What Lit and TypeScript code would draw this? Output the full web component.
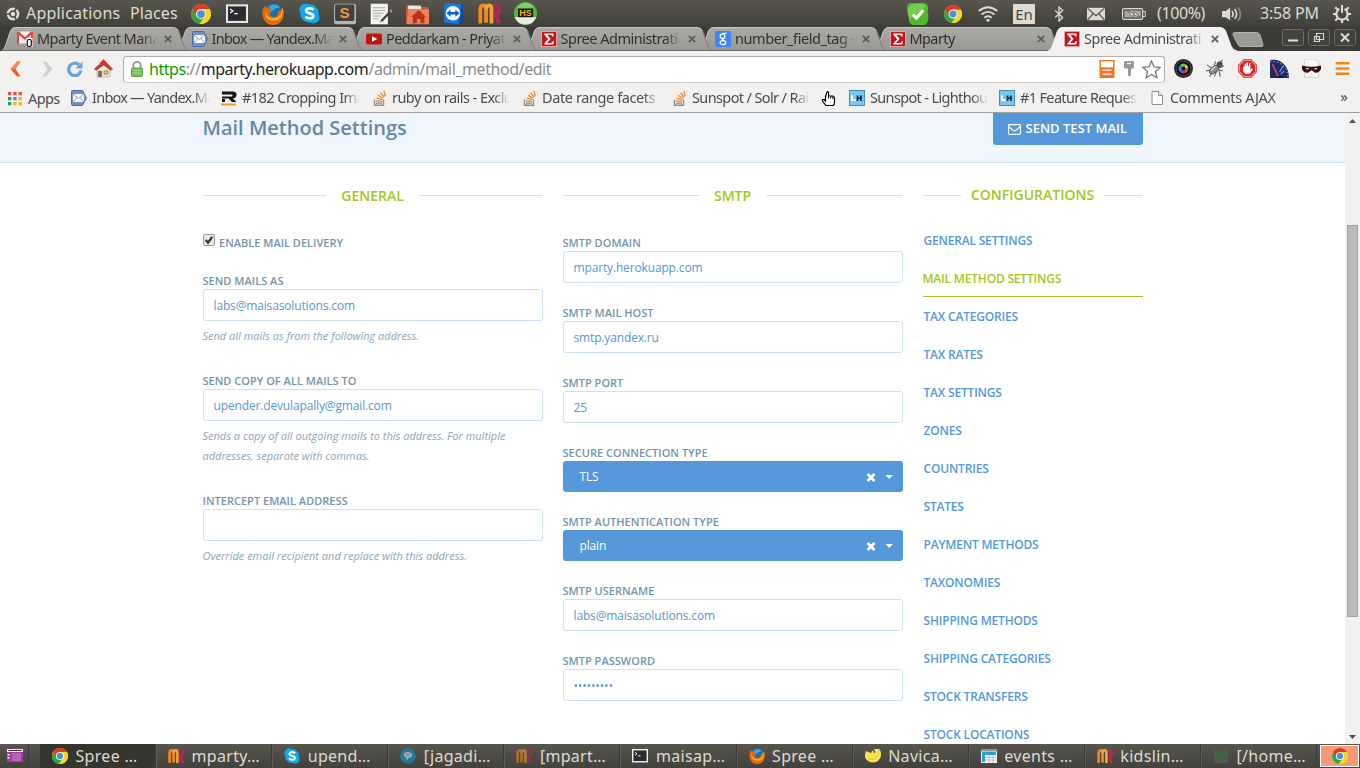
import { LitElement, html, css, svg, nothing } from 'lit';
import { customElement, property } from 'lit/decorators.js';
import { styleMap } from 'lit/directives/style-map.js';

const art: Record<string, any> = {
  ubuntu: svg`<circle cx="8" cy="8" r="6.4" fill="#dfdbd2"/><circle cx="8" cy="8" r="3" fill="none" stroke="#4a4943" stroke-width="1.5"/><path d="M1.5 8h4M9.6 5.2l2-3.6M9.6 10.8l2 3.6" stroke="#4a4943" stroke-width="1.6"/>`,
  chrome: svg`<circle cx="8" cy="8" r="8" fill="#f9d61f"/><path d="M14.9 4H8l-3.5 6L1.1 4a8 8 0 0 0 5.8 11.9L10.6 10z" fill="#32a447"/><path d="M8 4h6.9a8 8 0 0 1-8 11.9L11.5 10z" fill="#f9d61f"/><path d="M1.1 4A8 8 0 0 1 14.9 4H8L4.5 10z" fill="#de3a2b"/><circle cx="8" cy="8" r="4" fill="#f4f4f4"/><circle cx="8" cy="8" r="3.1" fill="#4a8fdf"/>`,
  terminal: svg`<rect x=".5" y="1.5" width="15" height="12.5" fill="#d8d8d6" stroke="#efefee"/><rect x="1.500" y="2.500" width="13" height="10.500" fill="#2c2b31"/><path d="M3 4.300l2 1.500-2 1.500M6 7.800h2.600" fill="none" stroke="#fff" stroke-width=".9"/>`,
  firefox: svg`<circle cx="8.2" cy="7.6" r="7.2" fill="#1d6fae"/><path d="M5 3c2-3 6-2 8 0l-3 1-3 2z" fill="#3aa9dc"/><path d="M15 3.2C17 8 15.500 16 8 16 2 16-.6 10 .7 4.400L1.800 2l.9 1.500L5 3.200c-.5 1.500 2 2 2.500 2.500-.2 1-1.700.8-2 2.300.4 2.400 3.600 3 5.300 1.200C12.500 7.200 11 5 13.800 5.600z" fill="#e66a16"/><path d="M15 3.200C16 9 13 13 8 12.800 3.500 12.600 2 9 2.500 6c.6 3 2 4.500 4.200 5 3.500.7 6.800-1.500 7.500-4.500z" fill="#f9b31f"/>`,
  skype: svg`<circle cx="5" cy="5" r="4.700" fill="#0fa6e6"/><circle cx="11" cy="11" r="4.700" fill="#0fa6e6"/><circle cx="8" cy="8" r="7" fill="#12a9ea"/><path d="M11 5.300C9.800 3.600 5.500 3.700 5.500 5.900c0 2.600 5.400 1.400 5.400 4 0 2.300-4.600 2.400-5.900.4" fill="none" stroke="#fff" stroke-width="2"/>`,
  sublime: svg`<rect x="0" y=".5" width="16" height="15" rx="1.500" fill="#b4b4b2"/><rect x=".8" y="1" width="14" height="12" rx="1" fill="#424143"/><text x="7.700" y="11" font-family="Liberation Sans" font-weight="bold" font-size="11" text-anchor="middle" fill="#f39b35">S</text>`,
  editor: svg`<rect x=".5" y=".5" width="12.500" height="15" fill="#f3f3f1"/><path d="M2 3.500h9M2 5.500h9M2 7.500h8M2 9.500h6M2 11.500h4" stroke="#a9a9a7" stroke-width=".8"/><path d="M7.500 12.800 14.800 5l1.200 1.300-7.200 7.500z" fill="#394438"/><path d="M14 5.800 15 4.600l1.600 1.500-1.100 1.200z" fill="#c178bd"/><path d="M6.500 14.200l1-1.700 1.400 1.300z" fill="#d7bb68"/>`,
  folder: svg`<path d="M0 2h6l1 1.500h8.500V15H0z" fill="#c9573a"/><path d="M1.500 2.500h9V5h-9z" fill="#eee9df"/><path d="M1.500 5H16v10.500H.5z" fill="#e8835d"/><path d="M8.800 5.500l5.200 5h-1.200v4.300h-2.800v-3H7.600v3H4.800v-4.300H3.600z" fill="#bd3210"/>`,
  teamviewer: svg`<path d="M1 0l13 1v14l-2 1L1 15z" fill="#0f79e6"/><path d="M14 1l1.300.8V14L12 16z" fill="#0b4da5"/><circle cx="7.600" cy="7.800" r="5.600" fill="#f4f8ff"/><path d="M2.600 7.800l3.200-2.600v1.600h3.600V5.200l3.200 2.600-3.200 2.600V8.800H5.800v1.600z" fill="#0a61c9"/>`,
  rubymine: svg`<path d="M1.600 15V5.300Q1.600 2.300 3.700 2.300T5.600 5.300V14.500" fill="none" stroke="#f08a22" stroke-width="2.600"/><path d="M5.600 5.300Q5.700 2.300 7.700 2.300T9.400 5.300V15" fill="none" stroke="#f3a632" stroke-width="2.600"/><path d="M10 1h1.500C17.500.8 17 8 14 9L16 15h-3L11 9.500V7c3 0 3.500-3.500 0-3.700z" fill="#bd2459"/>`,
  hs: svg`<circle cx="8" cy="8" r="8" fill="#58b33d"/><path d="M.5 10.500h15A8 8 0 0 1 .5 10.500z" fill="#eceae6"/><path d="M2 4A7 7 0 0 1 14 4z" fill="#84cf6b"/><rect x="2.800" y="4.600" width="10.500" height="6" fill="#191a16"/><text x="8" y="9.800" font-family="Liberation Sans" font-weight="bold" font-size="6.200" text-anchor="middle" fill="#f4ae21">HS</text>`,
  status: svg`<path d="M3 0h8c3.500 0 5 2 4 6 1.500 5 0 10-3 10H5.500C2 16 .8 13 1.500 10-.5 5-1 0 3 0z" fill="#52b82f"/><path d="M1 3C5 0 10 0 14 2L2 12C.5 10 0 6 1 3z" fill="#72cf4b"/><path d="M4.200 8.400l2.700 2.500 5-5.700" fill="none" stroke="#fff" stroke-width="2.300"/>`,
  wifi: svg`<path d="M.6 5.600Q8-.5 15.400 5.600M2.800 8.400Q8 4.200 13.200 8.400M5 11Q8 8.600 11 11" fill="none" stroke="#dfdbd2" stroke-width="1.500"/><path d="M6.300 12.800Q8 11.200 9.700 12.800L8 14.600z" fill="#dfdbd2"/>`,
  bluetooth: svg`<path d="M4.200 4.500l7.500 7L8 15V1l3.700 3.500-7.500 7" fill="none" stroke="#dfdbd2" stroke-width="1.300"/>`,
  envelope: svg`<path d="M0 2.500h16v11H0z" fill="#dfdbd2"/><path d="M.5 3l7.500 6.500L15.500 3M.5 13.200l5.200-5.700M15.500 13.200l-5.200-5.700" fill="none" stroke="#4c4b44" stroke-width="1.100"/>`,
  battery: svg`<rect x=".6" y="1.600" width="20" height="10.800" rx="1.500" fill="none" stroke="#dfdbd2" stroke-width="1.200"/><path d="M21 4.500h2.300v5H21" fill="none" stroke="#dfdbd2"/><rect x="2.500" y="3.500" width="16.300" height="7" fill="#aaa89f"/><path d="M5 3.500l7 3.500.5-2.200 6 5.700-7-3-.5 2.200z" fill="#f5f2e8" stroke="#4b4a43" stroke-width=".7"/>`,
  speaker: svg`<path d="M0 5.500h3L6.500 3v10L3 10.500H0z" fill="#dfdbd2"/><path d="M8 5.500q1.800 2.500 0 5M10.200 4q3 4 0 8" fill="none" stroke="#dfdbd2" stroke-width="1.300"/><path d="M12.800 2.500q4 5.500 0 11" fill="none" stroke="#8d8b82" stroke-width="1.300"/>`,
  power: svg`<path d="M5.700 3.600a5 5 0 1 0 4.600 0" fill="none" stroke="#dfdbd2" stroke-width="1.900"/><path d="M8 0v7" stroke="#dfdbd2" stroke-width="1.800"/><path d="M2 2l2.200 2.200M14 2l-2.200 2.200M0 8h3M16 8h-3M2 14l2.200-2.200M14 14l-2.200-2.200M8 16v-3" stroke="#dfdbd2" stroke-width="1.900"/>`,
  gmail: svg`<path d="M0 .5h16v12H0z" fill="#eee"/><path d="M0 13V.5h2L8 6l6-5.500h2V13h-2V4L8 9 2 4v9z" fill="#dd4b45"/><path d="M9.500 7h6v9h-6z" fill="#fff"/><rect x="10.300" y="8.500" width="4" height="7" rx="1.500" fill="#fff" stroke="#111" stroke-width="1.200"/>`,
  yandex: svg`<path d="M1.500.5h10L15.500 8l-4 7.500h-10a1 1 0 0 1-1-1v-13a1 1 0 0 1 1-1z" fill="#7390c8" stroke="#4d6ba7"/><path d="M2 4h11v8H2z" fill="#f5f7fc"/><path d="M2 4l5.500 4.500L13 4M2 12l4-4.500M13 12 9 7.500" fill="none" stroke="#7288b5" stroke-width=".8"/>`,
  youtube: svg`<rect y="2.500" width="16" height="11" rx="2" fill="#c4130e"/><path d="M6 5.200v5.600L11.300 8z" fill="#fff"/>`,
  sigma: svg`<rect width="16" height="16" rx="1" fill="#f3dada"/><rect x=".7" y=".7" width="14.600" height="14.600" fill="#c4161c"/><path d="M3.300 2.500h9.200v3h-1.100Q11 3.800 9 3.800H6.400L9.500 7.900 6 12h3.500q2 0 2.500-2h1l-.7 3.500H3.300v-.9L7.100 8.300 3.300 3.500z" fill="#fff"/>`,
  google: svg`<rect width="16" height="16" rx="1.500" fill="#4285f4"/><circle cx="7.500" cy="5.200" r="2.300" fill="none" stroke="#fff" stroke-width="1.300"/><path d="M7.500 2.400h4M8.200 7.400l-.6 1.300 2.300 1.600" fill="none" stroke="#fff" stroke-width="1.200"/><ellipse cx="7.900" cy="11.700" rx="2.800" ry="2" fill="none" stroke="#fff" stroke-width="1.200"/>`,
  back: svg`<path d="M12.500.5H9L2.500 8 9 15.500h3.500L7.500 8z" fill="#ea5f2c"/><path d="M12.500.5H9L2.500 8h5z" fill="#f28e63"/>`,
  forward: svg`<path d="M3.500.5H7L13.500 8 7 15.500H3.500L8.500 8z" fill="#cfcecc"/>`,
  reload: svg`<path d="M12 3.700A6.200 6.200 0 1 0 14 9.500" fill="none" stroke="#6ba2d6" stroke-width="3.200"/><path d="M15.500.5v7h-7z" fill="#6ba2d6"/>`,
  house: svg`<path d="M2.500 7.500 8 3l5.500 4.500v7.700h-11z" fill="#efe6d7" stroke="#b3a792" stroke-width=".6"/><path d="M.3 8.700 8 .5l7.700 8.200-1.700.6L8 5 2 9.300z" fill="#c63c36" stroke="#ad2b2b" stroke-width=".6"/><path d="M3.600 10h3v5h-3z" fill="#6d6259"/><path d="M8.400 10h3.400v2.800H8.400z" fill="#e7c565" stroke="#786750" stroke-width=".5"/><path d="M3 2h2v2L3 6z" fill="#ddd"/>`,
  lock: svg`<path d="M4.300 8V4.500a3.700 3.700 0 0 1 7.400 0V8" fill="none" stroke="#9b9b99" stroke-width="2"/><rect x="2.500" y="7" width="11" height="8.500" rx="1" fill="#78c257" stroke="#58a13c"/><path d="M3.500 9.500h9M3.500 12h9" stroke="#9bd680"/>`,
  stack2: svg`<rect x="2" y=".5" width="12" height="15" fill="#fff" stroke="#f47521" stroke-width="1.300"/><rect x="2" y="6.500" width="12" height="9" fill="#f47521"/><path d="M4 9h8M4 12.500h8" stroke="#fff" stroke-width="1.200"/>`,
  key: svg`<path d="M4 0h8a1 1 0 0 1 1 1v5.500a1 1 0 0 1-1 1h-2V14l-1.500 1.500L7 14.500v-7H4a1 1 0 0 1-1-1V1a1 1 0 0 1 1-1z" fill="#999"/><path d="M6 2.500h4" stroke="#fff" stroke-width="1.200"/>`,
  star: svg`<path d="M8 .8l2.100 5 5.300.4-4.100 3.500 1.300 5.200L8 12.100l-4.600 2.800 1.300-5.200L.6 6.200l5.300-.4z" fill="#fff" stroke="#747474" stroke-width="1.050"/>`,
  lens: svg`<circle cx="8" cy="8" r="8" fill="#25282b"/><circle cx="8" cy="8" r="6.200" fill="#09090b" stroke="#555" stroke-width=".7"/><path d="M8 8 5 5a4 4 0 0 1 5-.5z" fill="#78c63c"/><path d="M8 8l2-3.500A4 4 0 0 1 12 8z" fill="#ebce36"/><path d="M8 8h4a4 4 0 0 1-3 4z" fill="#e34b48"/><path d="M8 8l1 4a4 4 0 0 1-4-1z" fill="#9f38b5"/><path d="M8 8 5 11a4 4 0 0 1 0-6z" fill="#268ed4"/><circle cx="8" cy="8" r="1.600" fill="#151a24"/>`,
  bug: svg`<path d="M1 5l4 3M0 10l5-1M3 15l3-5M7 15l2-5M8 2L7 6M12 15l-1-5M14 10l-4-1M15 6l-4 1M14 1l-3 2" stroke="#666" stroke-width=".9"/><ellipse cx="7" cy="9" rx="4.800" ry="2.600" transform="rotate(-38 7 9)" fill="#8b8d8d" stroke="#4a4a4a" stroke-width=".7"/><circle cx="11.500" cy="4.800" r="2.600" fill="#4d4f50"/><path d="M4 10l4-4" stroke="#ddd"/>`,
  stop: svg`<path d="M5 0h6l5 5v6l-5 5H5l-5-5V5z" fill="#c9201f"/><path d="M5.400 1h5.200L15 5.400v5.200L10.600 15H5.400L1 10.600V5.400z" fill="#dc2524" stroke="#f9d7d4" stroke-width=".8"/><path d="M4.300 6.500h1.200V4h1.200v3.500l.4-4.500h1.300l.3 4.500.8-4h1.100L10.300 9l1.500-1.200.7.700L10 12.500H6L4.300 10z" fill="#fff"/>`,
  gauge: svg`<path d="M0 1C9-1 16 6 16 16H0z" fill="#1b2d69"/><path d="M0 2C8 1 15 7 15 15" fill="none" stroke="#9cabe2" stroke-width="1" stroke-dasharray="1 2"/><path d="M2 4l5 11" stroke="#d7463d" stroke-width="1.500"/><path d="M11 6l-3 5M12 10l-3 3" stroke="#8ba3df" stroke-width=".9"/><path d="M4 16a6 6 0 0 1 8 0z" fill="#0b1436"/>`,
  mask: svg`<path d="M2 0h9l3 3v12.500H2z" fill="#f9f9f9" stroke="#c8c8c8" stroke-width=".7"/><path d="M0 5.500q8 2 16 0v3q-1.500 3.500-5 3L8 9.500l-3 2q-3.500.5-5-3z" fill="#3a1215"/><path d="M3 8q1.500-1 3 .5-1.500 1-3-.5M10 8.500q1.500-1.500 3-.5-1.500 1.500-3 .5" fill="#eee"/>`,
  menu: svg`<path d="M1.500 3h13M1.500 8h13M1.500 13h13" stroke="#ef8a18" stroke-width="2.300"/>`,
  apps: svg`<path d="M1 2h3.300v3.300H1zM6.300 2h3.300v3.300H6.300zM11.600 2h3.300v3.300h-3.300z" fill="#e14d3f"/><path d="M11.600 7h3.300v3.300h-3.300zM11.600 12h3.300v3.300h-3.300zM6.300 12h3.300v3.300H6.300z" fill="#f2b21c"/><path d="M6.300 7h3.300v3.300H6.300z" fill="#4a86e8"/><path d="M1 12h3.300v3.300H1zM1 7h3.300v3.300H1z" fill="#24a05c"/>`,
  railscast: svg`<path d="M1 1.500h11q3.500 0 3.500 3.200T12 8.500l3.500 3.500H11L7.500 8.500H1V6.500h10q1.200-1 0-2H1z" fill="#161616"/><path d="M1 9h3v3H1z" fill="#161616"/><path d="M0 13.500h15v2H0z" fill="#f09a24"/>`,
  stackoverflow: svg`<path d="M3.500 9.500v5.700h9V9.500" fill="none" stroke="#8b8d8f" stroke-width="1.400"/><path d="M5 13.200h6" stroke="#8b8d8f" stroke-width="1.300"/><path d="M5 10.800l6 .5M5.500 8l5.800 1.700M7 5.200l5 3M9.500 2.700l3.600 4.500M13 .8l1.200 5.500" stroke="#f08022" stroke-width="1.300"/>`,
  lighthouse: svg`<rect x=".5" y=".5" width="15" height="15" fill="#7cc8ec" stroke="#3d8fc0"/><path d="M3 5.500v4.700h4" fill="none" stroke="#fff" stroke-width="1.800"/><path d="M8.500 5.500v5.500M12 5.500v5.500M8.500 8.200H12" stroke="#0b3454" stroke-width="1.800"/>`,
  doc: svg`<path d="M3 1.500h6.500l4 4v9H3z" fill="#fcfcfc" stroke="#8e8e8c"/><path d="M9.500 1.500v4h4" fill="#eee" stroke="#8e8e8c"/>`,
  desktop: svg`<rect x="0" y="1" width="16" height="13" fill="#9d3e9c"/><path d="M0 1h16v3H0z" fill="#f0e4ed"/><path d="M1.500 2.500h13" stroke="#55204f"/><path d="M1.500 6v1.500M1.500 9v1.500" stroke="#fff" stroke-width="2"/><path d="M5 5h9v8H5z" fill="#ba62b5"/>`,
  pidgin: svg`<circle cx="8" cy="8" r="7.800" fill="#23799a"/><path d="M4 7q0-3 4-3t4 3-4 3l-.5 2.500L6 9.500Q4 9 4 7z" fill="#a6b4b6"/><path d="M5.500 6h5M5.500 7.800h4" stroke="#4e7987" stroke-width=".8"/>`,
  navicat: svg`<path d="M1 3l5 2 2-3 1 3 6-3q3 6-2 11-5 3-10 0Q-2 10 1 3z" fill="#f8e34f"/><path d="M3 10q5 4 10-3" fill="none" stroke="#e0c030" stroke-width=".8"/><path d="M9 1l2 4 4-4z" fill="#fff36c"/>`,
  table: svg`<rect x="0" y="1" width="16" height="14" fill="#f1f3f2"/><path d="M0 1h16v2.500H0z" fill="#89979b"/><path d="M1 4h14v3H1zM1 7h3v7H1z" fill="#2c9fcb"/><path d="M8 7v8M12 7v8M4 9.500h11M4 12h11" stroke="#abb5b7" stroke-width=".7"/>`,
  sync: svg`<rect x="1" y="1" width="14" height="14" fill="#55584f"/><path d="M2.500 5h9M11 5l-2-2.500M11 5 9 7.500M13.500 11H5m0 0l2-2.500M5 11l2 2.500" fill="none" stroke="#2e6e39" stroke-width="1.800"/>`,
};

@customElement('ui-glyph')
export class UiGlyph extends LitElement {
  @property() name = '';
  @property({ type: Number }) size = 16;
  static styles = css`
    :host { display: block; flex: none; line-height: 0; }
    svg { display: block; }
  `;
  render() {
    const wide = this.name === 'battery';
    return html`<svg width=${wide ? 24 : this.size} height=${wide ? 14 : this.size} viewBox=${wide ? '0 0 24 14' : '0 0 16 16'}>${art[this.name]}</svg>`;
  }
}

const launchers: [string, number][] = [
  ['chrome', 20], ['terminal', 22], ['firefox', 22], ['skype', 21], ['sublime', 22],
  ['editor', 22], ['folder', 23], ['teamviewer', 21], ['rubymine', 23], ['hs', 23],
];

const tabs = [
  { icon: 'gmail', title: 'Mparty Event Mana', tracking: -0.58 },
  { icon: 'yandex', title: 'Inbox — Yandex.Ma', tracking: -0.75 },
  { icon: 'youtube', title: 'Peddarkam - Priyat', tracking: -0.6 },
  { icon: 'sigma', title: 'Spree Administrati', tracking: -0.5 },
  { icon: 'google', title: 'number_field_tag -', tracking: -0.42 },
  { icon: 'sigma', title: 'Mparty', tracking: -0.6 },
  { icon: 'sigma', title: 'Spree Administrati', active: true, tracking: -0.5 },
];

const bookmarks = [
  { icon: 'yandex', title: 'Inbox — Yandex.Ma', tracking: -0.75 },
  { icon: 'railscast', title: '#182 Cropping Ima', tracking: -0.55 },
  { icon: 'stackoverflow', title: 'ruby on rails - Exclu', tracking: -0.55 },
  { icon: 'stackoverflow', title: 'Date range facets w', tracking: -0.4 },
  { icon: 'stackoverflow', title: 'Sunspot / Solr / Rai', tracking: -0.62 },
  null,
  { icon: 'lighthouse', title: 'Sunspot - Lighthou', tracking: -0.65 },
  { icon: 'lighthouse', title: '#1 Feature Reques', tracking: -0.65 },
  { icon: 'doc', title: 'Comments AJAX', tracking: -0.32 },
];

const menuItems = [
  'General Settings', 'Mail Method Settings', 'Tax Categories', 'Tax Rates', 'Tax Settings',
  'Zones', 'Countries', 'States', 'Payment Methods', 'Taxonomies', 'Shipping Methods',
  'Shipping Categories', 'Stock Transfers', 'Stock Locations',
];

const tasks = [
  { icon: 'chrome', title: 'Spree …', active: true },
  { icon: 'rubymine', title: 'mparty…' },
  { icon: 'skype', title: 'upend…' },
  { icon: 'pidgin', title: '[jagadi…' },
  { icon: 'rubymine', title: '[mpart…', dim: true },
  { icon: 'terminal', title: 'maisap…' },
  { icon: 'firefox', title: 'Spree …' },
  { icon: 'navicat', title: 'Navica…' },
  { icon: 'table', title: 'events …' },
  { icon: 'rubymine', title: 'kidslin…' },
  { icon: 'sync', title: '[/home…' },
];

@customElement('desktop-panel')
export class DesktopPanel extends LitElement {
  static styles = css`
    :host { display: block; height: 27px; background: linear-gradient(#57554d, #403f3a); font: 16px/27px 'Noto Sans', sans-serif; color: #dfdbd2; }
    .bar { display: flex; align-items: center; height: 27px; white-space: nowrap; }
    .logo { padding: 0 5px 0 5px; }
    .apps { width: 104px; letter-spacing: 0.2px; }
    .places { width: 53px; letter-spacing: 0.1px; }
    .slot { display: flex; justify-content: center; width: 36px; flex: none; }
    .launch { display: flex; width: 360px; align-items: center; }
    .right { margin-left: auto; display: flex; align-items: center; }
    .lang { width: 22px; height: 20px; margin-top: 1px; background: #dfdbd2; color: #45443e; border-radius: 1px; font-size: 15px; line-height: 21px; text-align: center; }
    .pct { width: 65px; padding-left: 6px; letter-spacing: -0.4px; }
    .time { width: 82px; padding-left: 18px; letter-spacing: -0.2px; box-sizing: border-box; }
  `;
  private slotOf(width: number, icon: string, size: number) {
    return html`<span class="slot" style=${styleMap({ width: `${width}px` })}><ui-glyph name=${icon} size=${size}></ui-glyph></span>`;
  }
  render() {
    return html`<div class="bar">
      <ui-glyph class="logo" name="ubuntu" size="16"></ui-glyph>
      <span class="apps">Applications</span><span class="places">Places</span>
      <div class="launch">${launchers.map(([n, s]) => this.slotOf(36, n, s))}</div>
      <div class="right">
        ${this.slotOf(35, 'status', 22)}${this.slotOf(35, 'chrome', 18)}${this.slotOf(36, 'wifi', 20)}
        <span class="slot"><span class="lang">En</span></span>
        ${this.slotOf(33, 'bluetooth', 16)}${this.slotOf(42, 'envelope', 18)}${this.slotOf(34, 'battery', 24)}
        <span class="pct">(100%)</span>
        ${this.slotOf(20, 'speaker', 20)}
        <span class="time">3:58 PM</span>
        ${this.slotOf(36, 'power', 18)}
      </div>
    </div>`;
  }
}

@customElement('browser-chrome')
export class BrowserChrome extends LitElement {
  static styles = css`
    :host { display: block; background: #f2f1f0; font-family: 'Noto Sans', sans-serif; color: #4c4c4c; }
    .strip { display: flex; height: 24px; background: #3c3b37; overflow: hidden; }
    .tab { display: grid; grid-template: 24px / 191px; flex: none; width: 174.5px; }
    .tab svg { grid-area: 1 / 1; }
    .inner { grid-area: 1 / 1; display: flex; align-items: center; padding-left: 17px; z-index: 1; }
    .label { width: 121px; margin-left: 4px; overflow: hidden; white-space: nowrap; font-size: 14.500px; line-height: 20px; height: 22px; color: #33302c; mask-image: linear-gradient(90deg, #000 104px, transparent); }
    .x { margin-left: 6px; }
    .current .label { color: #4a4a4a; }
    .newtab { margin: 5px 0 0 10px; flex: none; }
    .window { display: flex; gap: 4px; margin: 2px 4px 0 auto; }
    .tools { display: flex; align-items: center; height: 33px; padding-top: 2px; box-sizing: border-box; }
    .nav { display: flex; align-items: center; width: 123px; padding-left: 8px; gap: 12px; box-sizing: border-box; }
    .nav .fwd { margin: 0 0 0 3px; }
    .nav .home { margin-left: -1px; }
    .omni { display: flex; align-items: center; width: 1042px; height: 27px; padding: 0 3px 0 5px; border: 1px solid #b1afad; border-bottom-color: #cfcecc; border-radius: 3px; background: #fff; box-sizing: border-box; margin-top: 1px; }
    .url { flex: 1; margin-left: 4px; font-size: 16px; line-height: 24px; letter-spacing: -0.44px; color: #8c8c8c; white-space: nowrap; }
    .secure { color: #0a9a0a; }
    .host { color: #222; }
    .inside { display: flex; align-items: center; gap: 5px; }
    .ext { display: flex; align-items: center; gap: 13px; padding-left: 9px; }
    .marks { display: flex; align-items: center; height: 28px; padding-left: 7px; font-size: 14.500px; line-height: 24px; white-space: nowrap; position: relative; box-sizing: border-box; }
    .appsitem { display: flex; align-items: center; width: 64px; gap: 5px; letter-spacing: -0.6px; line-height: 22px; }
    .mark { display: flex; align-items: center; width: 150px; flex: none; }
    .mark.blank { width: 28px; }
    .name { width: 118px; height: 25px; line-height: 23px; margin-left: 5px; overflow: hidden; mask-image: linear-gradient(90deg, #000 102px, transparent); }
    .more { margin-left: auto; padding-right: 12px; font-size: 15px; line-height: 20px; height: 24px; }
    .pointer { position: absolute; left: 821px; top: 7px; }
    .edge { height: 1px; background: #a5a3a1; }
  `;
  private tab(t: { icon: string; title: string; active?: boolean; tracking: number }, i: number) {
    const fill = t.active ? '#f2f1f0' : 'url(#shade)';
    return html`<div class="tab ${t.active ? 'current' : ''}" style=${styleMap({ zIndex: String(t.active ? 20 : 10 - i) })}>
      <svg width="191" height="24" viewBox="0 0 191 24">
        <defs><linearGradient id="shade" x2="0" y2="1"><stop stop-color="#aaa9a6"/><stop offset="1" stop-color="#999895"/></linearGradient></defs>
        <path d="M1 24Q4 23 5 20L10.500 4Q12 .5 15 .5H173Q177 .5 178.500 4L184 19Q186 23.500 190 24" fill=${fill} stroke=${t.active ? '#f6f5f4' : '#cbcac7'} stroke-width="1"/>
        ${t.active ? nothing : svg`<path d="M178.500 4L184 19Q186 23.500 190 24M1 23.500H190" fill="none" stroke="#6d6c69"/>`}
      </svg>
      <div class="inner">
        <ui-glyph name=${t.icon}></ui-glyph>
        <span class="label" style=${styleMap({ letterSpacing: `${t.tracking}px` })}>${t.title}</span>
        <svg class="x" width="8" height="8" viewBox="0 0 8 8"><path d="M.8.8l6.400 6.400M7.200.8.8 7.200" stroke="#5c5b59" stroke-width="1.700"/></svg>
      </div>
    </div>`;
  }
  private winButton(shape: unknown) {
    return html`<svg width="22" height="17" viewBox="0 0 22 17"><rect x=".5" y=".5" width="21" height="16" rx="2" fill="#43423e" stroke="#6c6b66"/>${shape}</svg>`;
  }
  render() {
    return html`
      <div class="strip">
        ${tabs.map((t, i) => this.tab(t, i))}
        <svg class="newtab" width="32" height="15" viewBox="0 0 32 15"><path d="M2.500.5h22q2.500 0 3.300 2l3.200 10q.5 2-2 2H9q-2 0-3-2L1 3Q.5.500 2.500.5z" fill="#9c9b98" stroke="#b4b3b0"/></svg>
        <div class="window">
          ${this.winButton(svg`<path d="M6 11.500h10" stroke="#e4e2dd" stroke-width="2"/>`)}
          ${this.winButton(svg`<path d="M8.500 4.500h7v6h-7zM6.500 7.500h5v5h-5z" fill="none" stroke="#d7d5d0" stroke-width="1.200"/>`)}
          ${this.winButton(svg`<path d="M7 4.500l8 8M15 4.500l-8 8" stroke="#e4e2dd" stroke-width="1.800"/>`)}
        </div>
      </div>
      <div class="tools">
        <div class="nav"><ui-glyph name="back"></ui-glyph><ui-glyph class="fwd" name="forward"></ui-glyph><ui-glyph name="reload"></ui-glyph><ui-glyph class="home" name="house" size="19"></ui-glyph></div>
        <div class="omni">
          <ui-glyph name="lock"></ui-glyph>
          <span class="url"><span class="secure">https</span>://<span class="host">mparty.herokuapp.com</span>/admin/mail_method/edit</span>
          <div class="inside"><ui-glyph name="stack2" size="18"></ui-glyph><ui-glyph name="key"></ui-glyph><ui-glyph name="star" size="19"></ui-glyph></div>
        </div>
        <div class="ext">
          ${['lens', 'bug', 'stop', 'gauge', 'mask'].map((n) => html`<ui-glyph name=${n} size="19"></ui-glyph>`)}
          <ui-glyph name="menu" size="17"></ui-glyph>
        </div>
      </div>
      <div class="marks">
        <span class="appsitem"><ui-glyph name="apps"></ui-glyph>Apps</span>
        ${bookmarks.map((b) => b
          ? html`<span class="mark"><ui-glyph name=${b.icon}></ui-glyph><span class="name" style=${styleMap({ letterSpacing: `${b.tracking}px` })}>${b.title}</span></span>`
          : html`<span class="mark blank"></span>`)}
        <span class="more">»</span>
        <svg class="pointer" width="15" height="15" viewBox="0 0 15 15"><path d="M4.500 5.500 6 1q1.500-1 1.500 1v3h4.500q1.500.5 1.500 3v3q0 3-1.500 3.500H5L1.500 10V8.500L3 8.500 4.500 10z" fill="#fff" stroke="#000" stroke-width="1.200"/><path d="M7.500 5v2.500M9.700 5v2.500M11.800 5.500V8" stroke="#000"/></svg>
      </div>
      <div class="edge"></div>`;
  }
}

@customElement('settings-page')
export class SettingsPage extends LitElement {
  static styles = css`
    :host { display: flex; height: 631px; overflow: hidden; background: #fff; font-family: 'Open Sans', sans-serif; color: #5498da; }
    .view { width: 1345px; flex: none; overflow: hidden; }
    .band { height: 49px; background: #eff5fc; border-bottom: 1px solid #cee1f4; }
    .wrap { width: 940px; margin: 0 auto; display: flex; }
    .title { flex: 1; margin: 0; font-size: 20px; font-weight: 600; line-height: 30px; color: #6788a2; }
    .send { display: flex; align-items: center; gap: 5px; width: 150px; height: 32px; box-sizing: border-box; padding: 0 0 2px 15px; border-radius: 0 0 3px 3px; background: #5498da; color: #fff; font-size: 13px; font-weight: 600; white-space: nowrap; }
    .send svg { margin-top: 2px; }
    .cols { gap: 20px; }
    .main { width: 340px; flex: none; padding-top: 23px; }
    .side { width: 220px; flex: none; padding-top: 22px; }
    .legend { display: flex; align-items: center; gap: 15px; height: 20px; color: #9fc820; font-size: 14px; font-weight: 600; line-height: 20px; }
    .legend::before, .legend::after { content: ''; flex: 1; height: 1px; background: #cee1f4; margin-top: -1px; }
    .side .legend { gap: 10px; }
    .side .legend::before, .side .legend::after { margin-top: 1px; }
    .fields { padding-top: 29px; }
    .field { margin-bottom: 22px; }
    .field.noted { margin-bottom: 27px; }
    .label { height: 16px; line-height: 16px; font-size: 11px; font-weight: 600; letter-spacing: 0.02px; color: #7594ac; text-transform: uppercase; white-space: nowrap; }
    .input { height: 32px; border: 1px solid #cee1f4; border-radius: 3px; box-sizing: border-box; padding-left: 10px; font-size: 12px; letter-spacing: -0.15px; line-height: 31px; }
    .select { display: flex; align-items: center; height: 31px; border-radius: 3px; box-sizing: border-box; padding: 0 8.500px 0 17px; font-size: 12px; letter-spacing: -0.15px; background: #5498da; color: #fff; }
    .select .value { flex: 1; }
    .note { padding-top: 5px; font-size: 11px; line-height: 20px; font-style: italic; color: #8ba6bb; white-space: pre-line; }
    .check { display: flex; align-items: flex-start; gap: 4.500px; margin-bottom: 22px; }
    .check .label { letter-spacing: 0; }
    .box { margin-top: -1px; }
    .links { padding-top: 17px; }
    .link { height: 38px; box-sizing: border-box; padding-left: 1px; font-size: 12px; font-weight: 600; letter-spacing: -0.19px; line-height: 38px; text-transform: uppercase; }
    .link.on { padding-left: 0; height: 37px; margin-bottom: 1px; border-bottom: 1px solid #9fc820; color: #9fc820; }
    .scroll { display: flex; flex-direction: column; width: 15px; background: #f1f1f1; }
    .up { margin: 6px 0 0 4px; }
    .thumb { width: 11px; height: 392px; margin: 102px 0 0 2px; box-sizing: border-box; background: #bababa; border: 1px solid #a4a4a4; }
    .down { margin: auto 0 5px 4px; }
  `;
  private text(label: string, value: string, note?: string) {
    return html`<div class="field ${note ? 'noted' : ''}"><div class="label">${label}</div><div class="input">${value}</div>${note ? html`<div class="note">${note}</div>` : nothing}</div>`;
  }
  private pick(label: string, value: string) {
    return html`<div class="field"><div class="label">${label}</div><div class="select"><span class="value">${value}</span>
      <svg width="28" height="10" viewBox="0 0 28 10"><path d="M1.500 2l7 7M8.500 2l-7 7" stroke="#fff" stroke-width="2.700"/><path d="M19.500 3h7.500l-3.750 4z" fill="#fff"/></svg></div></div>`;
  }
  render() {
    return html`
      <div class="view">
        <div class="band"><div class="wrap">
          <h1 class="title">Mail Method Settings</h1>
          <div class="send"><svg width="13" height="11" viewBox="0 0 13 11"><path d="M.6 1.500q0-.9.9-.9h10q.9 0 .9.900v8q0 .9-.9.900h-10q-.9 0-.9-.9zM.8 2.800l4.400 3.600q1.300 1 2.600 0l4.400-3.600" fill="none" stroke="#fff" stroke-width="1.150"/></svg>SEND TEST MAIL</div>
        </div></div>
        <div class="wrap cols">
          <div class="main">
            <div class="legend">GENERAL</div>
            <div class="fields">
              <div class="check"><svg class="box" width="12" height="12" viewBox="0 0 12 12"><rect x=".5" y=".5" width="11" height="11" rx="1.500" fill="#e7e7e7" stroke="#9a9a9a"/><path d="M2.800 6l2.200 2.700L9.300 2.800" fill="none" stroke="#333" stroke-width="2.200"/></svg><span class="label">Enable Mail Delivery</span></div>
              ${this.text('Send Mails As', 'labs@maisasolutions.com', 'Send all mails as from the following address.')}
              ${this.text('Send Copy Of All Mails To', 'upender.devulapally@gmail.com', 'Sends a copy of all outgoing mails to this address. For multiple\naddresses, separate with commas.')}
              ${this.text('Intercept Email Address', '', 'Override email recipient and replace with this address.')}
            </div>
          </div>
          <div class="main">
            <div class="legend">SMTP</div>
            <div class="fields">
              ${this.text('SMTP Domain', 'mparty.herokuapp.com')}
              ${this.text('SMTP Mail Host', 'smtp.yandex.ru')}
              ${this.text('SMTP Port', '25')}
              ${this.pick('Secure Connection Type', 'TLS')}
              ${this.pick('SMTP Authentication Type', 'plain')}
              ${this.text('SMTP Username', 'labs@maisasolutions.com')}
              ${this.text('SMTP Password', '•••••••••')}
            </div>
          </div>
          <div class="side">
            <div class="legend">CONFIGURATIONS</div>
            <div class="links">${menuItems.map((m) => html`<div class="link ${m === 'Mail Method Settings' ? 'on' : ''}">${m}</div>`)}</div>
          </div>
        </div>
      </div>
      <div class="scroll">
        <svg class="up" width="7" height="4" viewBox="0 0 7 4"><path d="M0 4h7L3.500 0z" fill="#505050"/></svg>
        <div class="thumb"></div>
        <svg class="down" width="7" height="4" viewBox="0 0 7 4"><path d="M0 0h7L3.500 4z" fill="#505050"/></svg>
      </div>`;
  }
}

@customElement('task-bar')
export class TaskBar extends LitElement {
  static styles = css`
    :host { display: flex; height: 24px; background: linear-gradient(#57554d, #42413c); font: 16px/21px 'Noto Sans', sans-serif; color: #dfdbd2; }
    .show { display: flex; align-items: center; width: 29px; padding-left: 7px; box-sizing: border-box; border-right: 1px solid #3b3a36; }
    .grip { width: 11px; }
    .task { display: flex; align-items: center; width: 116.100px; flex: none; padding-left: 12px; box-sizing: border-box; border-right: 1px solid #3b3a36; box-shadow: inset 1px 0 #5f5d56; }
    .task.active { background: #35342f; box-shadow: none; }
    .dim { opacity: 0.6; }
    .name { height: 20px; margin-left: 7.500px; width: 78px; line-height: 21px; letter-spacing: 0.3px; overflow: hidden; white-space: nowrap; }
    .alert { display: flex; justify-content: center; align-items: center; flex: 1; margin: 1px 1px 1px 3px; border: 1px solid #fff; background: #f49a78; }
  `;
  render() {
    return html`
      <div class="show"><ui-glyph name="desktop"></ui-glyph></div><div class="grip"></div>
      ${tasks.map((t: any) => html`<div class="task ${t.active ? 'active' : ''}"><ui-glyph class=${t.dim ? 'dim' : ''} name=${t.icon}></ui-glyph><span class="name">${t.title}</span></div>`)}
      <div class="alert"><ui-glyph name="chrome"></ui-glyph></div>`;
  }
}

@customElement('app-root')
export class AppRoot extends LitElement {
  static styles = css`
    :host { display: block; width: 1360px; height: 768px; overflow: hidden; background: #fff; }
  `;
  render() {
    return html`<desktop-panel></desktop-panel><browser-chrome></browser-chrome><settings-page></settings-page><task-bar></task-bar>`;
  }
}
